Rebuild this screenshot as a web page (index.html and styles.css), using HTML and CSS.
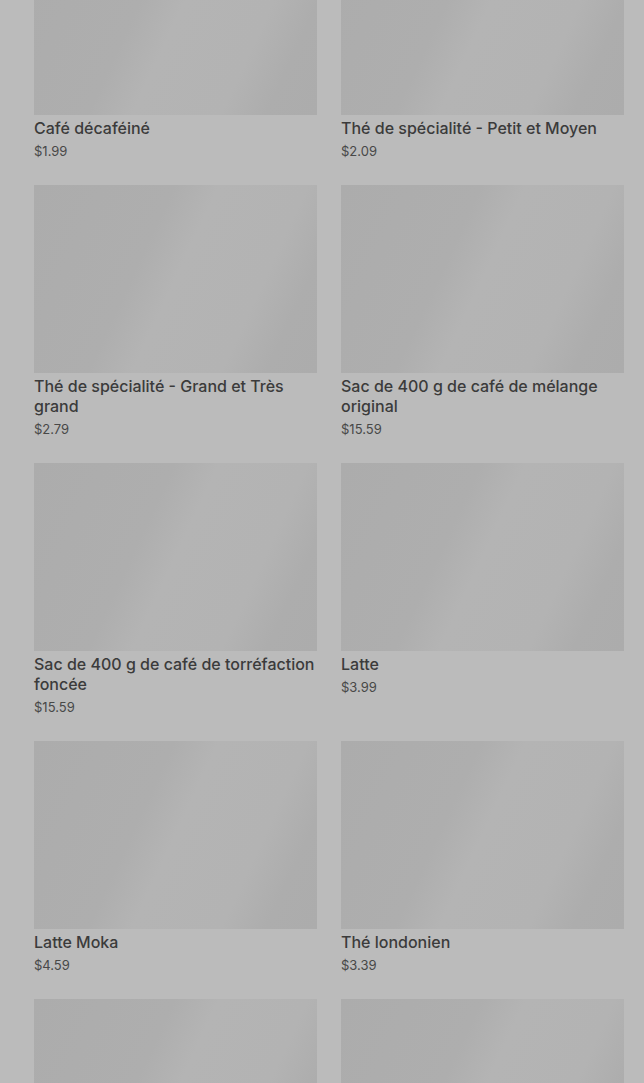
FILE: index.html
```html
<!DOCTYPE html>
<html lang="fr">
<head>
    <meta charset="UTF-8">
    <meta name="viewport" content="width=device-width, initial-scale=1.0">
    <title>Menu</title>
    <link rel="stylesheet" href="styles.css">
</head>
<body>
    <div class="grid">
        <div class="card">
            <div class="thumb"></div>
            <div class="name">Café décaféiné</div>
            <div class="price">$1.99</div>
        </div>
        <div class="card">
            <div class="thumb"></div>
            <div class="name">Thé de spécialité - Petit et Moyen</div>
            <div class="price">$2.09</div>
        </div>
        <div class="card">
            <div class="thumb"></div>
            <div class="name">Thé de spécialité - Grand et Très grand</div>
            <div class="price">$2.79</div>
        </div>
        <div class="card">
            <div class="thumb"></div>
            <div class="name">Sac de 400 g de café de mélange original</div>
            <div class="price">$15.59</div>
        </div>
        <div class="card">
            <div class="thumb"></div>
            <div class="name">Sac de 400 g de café de torréfaction foncée</div>
            <div class="price">$15.59</div>
        </div>
        <div class="card">
            <div class="thumb"></div>
            <div class="name">Latte</div>
            <div class="price">$3.99</div>
        </div>
        <div class="card">
            <div class="thumb"></div>
            <div class="name">Latte Moka</div>
            <div class="price">$4.59</div>
        </div>
        <div class="card">
            <div class="thumb"></div>
            <div class="name">Thé londonien</div>
            <div class="price">$3.39</div>
        </div>
        <div class="card">
            <div class="thumb"></div>
        </div>
        <div class="card">
            <div class="thumb"></div>
        </div>
    </div>
</body>
</html>
```

FILE: styles.css
```css
body {
    margin: 0;
    padding: 0;
    background-color: #bbbbbb;
    font-family: Inter, Roboto, "Liberation Sans", sans-serif;
    overflow: hidden;
    height: 1083px;
}

.grid {
    display: grid;
    grid-template-columns: 283px 283px;
    column-gap: 24px;
    row-gap: 25px;
    padding-left: 34px;
    margin-top: -73px;
}

/* loading placeholder */
.thumb {
    height: 188px;
    background: linear-gradient(115deg, #acacac 0%, #aeaeae 38%, #b4b4b4 50%, #b3b3b3 74%, #adadad 86%, #acacac 100%);
}

.name {
    margin-top: 3px;
    font-size: 16px;
    font-weight: 500;
    line-height: 20px;
    color: #3b3b3b;
}

.price {
    margin-top: 4px;
    font-size: 13px;
    line-height: 18px;
    color: #484848;
}
```
